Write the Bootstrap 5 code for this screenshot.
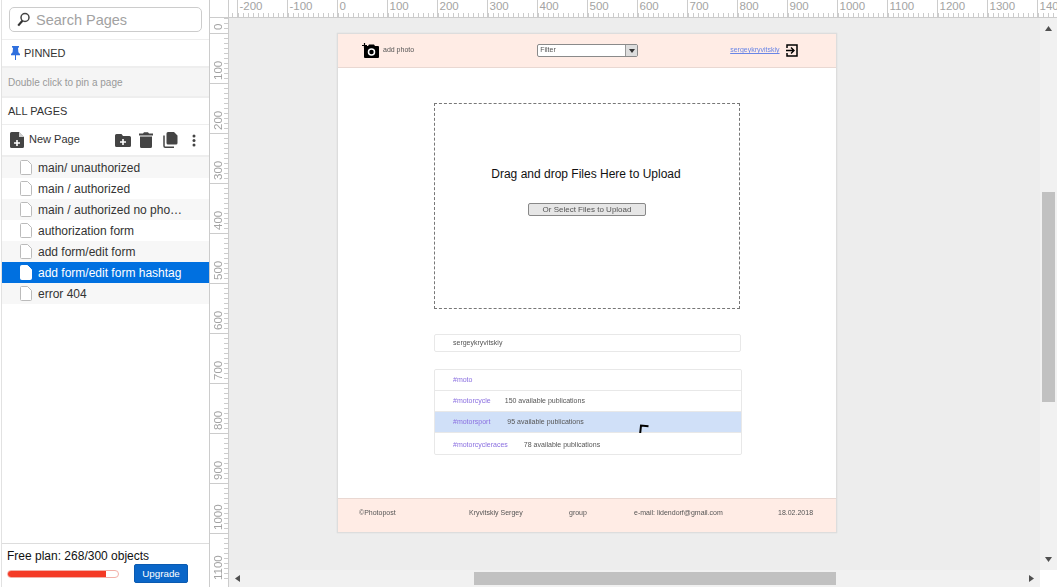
<!DOCTYPE html>
<html lang="en">
  <head>
    <meta charset="utf-8" />
    <title>Wireframe editor</title>
    <link href="https://cdn.jsdelivr.net/npm/bootstrap@5.3.2/dist/css/bootstrap.min.css" rel="stylesheet" />
    <style>
      html, body { height: 100%; }
      body {
        font-family: "Liberation Sans", Arial, sans-serif;
        font-size: 12px;
        color: #333;
        background: #fff;
        overflow: hidden;
      }
      .app-shell { height: 587px; width: 1057px; }

      /* left panel */
      .side-panel {
        margin-left: 1px;
        flex: 0 0 auto;
        border-left: 1px solid #e2e2e2;
        border-right: 1px solid #ccc;
        box-sizing: content-box;
        width: 207px;
      }
      .search-wrap { height: 40px; padding: 7px 7px 0 7px; border-bottom: 1px solid #eee; }
      .search-box { height: 25px; border: 1px solid #ccc; border-radius: 5px; padding: 0 0 0 7px; gap: 6px; }
      .search-box input { border: 0; outline: 0; padding: 1px 0 0 0; width: 150px; font-size: 14.5px; color: #999; background: none; line-height: 22px; }
      .search-box input::placeholder { color: #a2a2a2; opacity: 1; }
      .pin-row { height: 28px; padding-left: 9px; gap: 4px; font-size: 11px; border-bottom: 2px solid #eee; }
      .pin-hint { height: 30px; padding-left: 6px; background: #f5f5f5; color: #999; font-size: 10px; border-bottom: 2px solid #eee; }
      .all-row { height: 27px; padding-left: 6px; font-size: 11px; border-bottom: 1px solid #eee; }
      .tool-row { height: 32px; padding-left: 8px; border-bottom: 2px solid #eee; }
      .tool-row .new-page { margin-left: 5px; margin-right: 35px; font-size: 11px; position: relative; top: -1px; }
      .tool-row svg { flex: 0 0 auto; }
      .tool-gap { margin-left: 8px; }
      .tool-gap-copy { margin-left: 10px; }
      .tool-gap-more { margin-left: 14px; }
      .page-list { --bs-list-group-border-width: 0; --bs-list-group-bg: transparent; --bs-list-group-active-bg: #0070e0; --bs-list-group-active-color: #fff; }
      .page-list .list-group-item { height: 21px; padding: 0 0 0 18px; gap: 6px; font-size: 12px; color: #333; }
      .page-list .list-group-item:nth-child(odd) { background: #f7f7f7; }
      .page-list .list-group-item.active { background: #0070e0; color: #fff; font-weight: 400; }
      .page-name { white-space: nowrap; }
      .file-line { fill: #fff; stroke: #bbb; }
      .active .file-line { fill: #fff; stroke: #fff; }
      .plan-box { height: 44px; border-top: 1px solid #ddd; padding: 5px 0 0 5px; color: #111; line-height: 14px; }
      .plan-bar { height: 8px; width: 112px; margin-top: 7px; background: #fff; border: 1px solid #f3b0a8; border-radius: 4px; --bs-progress-bar-bg: #f43a25; }
      .upgrade-btn { --bs-btn-padding-y: 0; --bs-btn-padding-x: 0; --bs-btn-font-size: 9.8px; --bs-btn-bg: #0a66c8; --bs-btn-border-color: #0a5ab0; --bs-btn-border-radius: 2px; width: 54px; height: 19px; margin-left: 15px; margin-top: 1px; line-height: 17px; }

      /* rulers and canvas */
      .work-grid {
        display: grid;
        flex: 1 1 auto;
        min-width: 0;
        grid-template-columns: 19px 811px 17px;
        grid-template-rows: 18px 552px 17px;
      }
      .ruler-corner { border-right: 1px solid #ccc; border-bottom: 1px solid #ccc; }
      .ruler-top {
        grid-column: 2 / 4;
        display: flex;
        overflow: hidden;
        border-bottom: 1px solid #ccc;
        padding-left: 8px;
        background: linear-gradient(90deg, #ccc 1px, transparent 1px) 3px 100% / 5px 4px repeat-x;
      }
      .ruler-top .tick-cell { flex: 0 0 50px; height: 17px; background: #fff linear-gradient(90deg, #ccc 1px, transparent 1px) 0 100% / 5px 4px repeat-x; border-left: 1px solid #ccc; padding-left: 1.5px; font-size: 11.5px; line-height: 13px; color: #a3a3a3; }
      .ruler-side {
        grid-row: 2 / 4;
        overflow: hidden;
        border-right: 1px solid #ccc;
      }
      .ruler-side .tick-cell {
        display: flex;
        height: 50px;
        border-top: 1px solid #ccc;
        background: linear-gradient(#ccc 1px, transparent 1px) 100% 4px / 4px 5px repeat-y;
        color: #a3a3a3;
        font-size: 11.5px;
        line-height: 12px;
        padding-left: 2px;
        box-sizing: border-box;
      }
      .ruler-side .tick-cell span { writing-mode: vertical-rl; transform: rotate(180deg); padding-top: 3px; height: 49px; text-align: left; }
      .side-zero { margin-top: -35px; }

      .canvas-area { background: #ededed; padding: 15px 0 0 108px; overflow: hidden; }
      .scroll-v { background: #f1f1f1; padding: 8px 0; }
      .scroll-h { background: #f1f1f1; padding: 0 6px; }
      .thumb-v { width: 13px; height: 210px; margin: 161px auto auto auto; background: #c1c1c1; }
      .thumb-h { height: 13px; width: 362px; margin: auto auto auto 234px; background: #c1c1c1; }
      .scroll-corner { background: #fff; }

      /* the mockup */
      .mock-page { width: 500px; height: 500px; background: #fff; border: 1px solid #ddd; box-shadow: 0 0 1px #ccc; }
      .tiny-text { font-size: 7px; color: #555; filter: blur(0.3px); }
      .mock-head { height: 34px; background: #ffece5; border-bottom: 1px solid #e9d8d2; padding-left: 24px; flex: 0 0 auto; }
      .mock-head .add-label { margin-left: 4px; }
      .filter-box { width: 101px; height: 13px; margin-left: 123px; background: #fff; border: 1px solid #8a8a8a; border-radius: 2px; padding-left: 2px; }
      .filter-arrow { width: 12px; height: 100%; margin-left: auto; background: #ddd; border-left: 1px solid #999; }
      .user-link { margin-left: 92px; color: #6a86e6; text-decoration: underline; }
      .exit-icon { margin-left: 6px; }
      .mock-body { padding: 35px 0 0 96px; flex: 1 1 auto; }
      .drop-zone { width: 306px; height: 206px; border: 1px dashed #777; padding-top: 62px; }
      .drop-title { font-size: 12px; color: #111; line-height: 16px; margin-right: 2px; }
      .drop-btn { width: 118px; height: 13px; margin-top: 21px; background: #e6e6e6; border: 1px solid #888; border-radius: 2px; line-height: 11px; font-size: 8px; }
      .user-box { width: 307px; height: 18px; margin-top: 25px; border: 1px solid #e8e8e8; border-radius: 2px; padding: 1px 0 0 18px; }
      .tag-list { width: 308px; margin-top: 17px; border: 1px solid #e8e8e8; border-radius: 2px; --bs-list-group-border-width: 0; --bs-list-group-bg: transparent; }
      .tag-list .list-group-item { height: 21px; padding: 1px 0 0 18px; border-bottom: 1px solid #e8e8e8; background: #fff; }
      .tag-list .list-group-item:last-child { border-bottom: 0; padding-top: 3px; }
      .tag-list .tag-on { background: #d0e0f8; }
      .tag-name { color: #8a6fe0; }
      .tag-gap-a { margin-left: 14px; }
      .tag-gap-b { margin-left: 16px; }
      .tag-on .tag-gap-b { margin-left: 17px; }
      .mouse-mark { position: absolute; left: 204px; top: 12px; }
      .mock-foot {
        height: 34px;
        flex: 0 0 auto;
        display: grid;
        grid-template-columns: 110px 100px 65px 144px auto;
        align-items: center;
        padding: 0 0 4px 21px;
        background: #ffece5;
        border-top: 1px solid #e9d8d2;
      }
    </style>
  </head>
  <body>
    <div class="app-shell d-flex">
      <aside class="side-panel d-flex flex-column">
        <div class="search-wrap">
          <div class="search-box d-flex align-items-center">
            <svg width="13" height="15" viewBox="0 0 13 15"><circle cx="8" cy="5.5" r="4" fill="none" stroke="#444" stroke-width="1.5" /><path d="M5.4 8.8 1.2 13.6" stroke="#333" stroke-width="2.2" fill="none" /></svg>
            <input type="text" placeholder="Search Pages" />
          </div>
        </div>
        <div class="pin-row d-flex align-items-center">
          <svg width="9" height="14" viewBox="0 0 9 14"><path d="M1 0h7v1.2L7 2l.4 4.2L9 8v1.2H5V14H4V9.2H0V8l1.6-1.8L2 2 1 1.2z" fill="#2f6fde" /></svg>
          <span>PINNED</span>
        </div>
        <div class="pin-hint d-flex align-items-center">Double click to pin a page</div>
        <div class="all-row d-flex align-items-center">ALL PAGES</div>
        <div class="tool-row d-flex align-items-center">
          <svg width="14" height="16" viewBox="0 0 14 16"><path d="M1.5 0H9l5 5v9.5a1.5 1.5 0 0 1-1.5 1.5h-11A1.5 1.5 0 0 1 0 14.5v-13A1.5 1.5 0 0 1 1.5 0z" fill="#444" /><path d="M9 0v5h5z" fill="#fff" opacity=".75" /><path d="M7 8v6M4 11h6" stroke="#fff" stroke-width="1.6" /></svg>
          <span class="new-page">New Page</span>
          <svg width="16" height="13" viewBox="0 0 16 13"><path d="M1.5 0h5L8 2h6.5A1.5 1.5 0 0 1 16 3.5v8a1.5 1.5 0 0 1-1.5 1.5h-13A1.5 1.5 0 0 1 0 11.5v-10A1.5 1.5 0 0 1 1.5 0z" fill="#444" /><path d="M8 5v6M5 8h6" stroke="#fff" stroke-width="1.6" /></svg>
          <svg class="tool-gap" width="14" height="16" viewBox="0 0 14 16"><path d="M0 1.5h4L5 .3h4l1 1.2h4V3.5H0zM1 4.5h12V14.500a1.500 1.500 0 0 1-1.500 1.500h-9A1.500 1.500 0 0 1 1 14.500z" fill="#444" /></svg>
          <svg class="tool-gap-copy" width="15" height="16" viewBox="0 0 15 16"><path d="M5 0h6l3.500 3.500V11a1.500 1.500 0 0 1-1.500 1.500H5A1.500 1.500 0 0 1 3.500 11V1.500A1.500 1.500 0 0 1 5 0z" fill="#444" /><path d="M1 3.500V14a1.200 1.200 0 0 0 1.200 1.200H11" fill="none" stroke="#444" stroke-width="1.500" /></svg>
          <svg class="tool-gap-more" width="4" height="13" viewBox="0 0 4 13"><circle cx="2" cy="2" r="1.500" fill="#444" /><circle cx="2" cy="6.500" r="1.500" fill="#444" /><circle cx="2" cy="11" r="1.500" fill="#444" /></svg>
        </div>
        <div class="page-list list-group list-group-flush" id="pageList"></div>
        <div class="plan-box mt-auto">
          <div>Free plan: 268/300 objects</div>
          <div class="d-flex align-items-start">
            <div class="progress plan-bar"><div class="progress-bar" id="planFill"></div></div>
            <button class="btn btn-primary upgrade-btn" type="button">Upgrade</button>
          </div>
        </div>
      </aside>

      <main class="work-grid">
        <div class="ruler-corner"></div>
        <div class="ruler-top" id="rulerTop"></div>
        <div class="ruler-side" id="rulerSide"></div>

        <div class="canvas-area">
          <div class="mock-page d-flex flex-column">
            <header class="mock-head d-flex align-items-center tiny-text">
              <svg width="17" height="15" viewBox="0 0 17 15"><path d="M3 3h3l1-1.500h5L13 3h3a1 1 0 0 1 1 1v10a1 1 0 0 1-1 1H3a1 1 0 0 1-1-1V4a1 1 0 0 1 1-1z" fill="#000" /><circle cx="9.500" cy="9" r="3" fill="none" stroke="#fff" stroke-width="1.500" /><path d="M2.500 0v5M0 2.500h5" stroke="#000" stroke-width="1.200" /></svg>
              <span class="add-label">add photo</span>
              <div class="filter-box d-flex align-items-center">
                <span>Filter</span>
                <div class="filter-arrow d-flex align-items-center justify-content-center">
                  <svg width="6" height="4" viewBox="0 0 6 4"><path d="M0 0h6L3 4z" fill="#333" /></svg>
                </div>
              </div>
              <a class="user-link" href="#">sergeykryvitskiy</a>
              <svg class="exit-icon" width="12" height="13" viewBox="0 0 12 13"><path d="M1 4V1h10v11H1V9" fill="none" stroke="#000" stroke-width="1.500" /><path d="M0 6.500h7M5 3.500l3 3-3 3" fill="none" stroke="#000" stroke-width="1.400" /></svg>
            </header>

            <section class="mock-body d-flex flex-column">
              <div class="drop-zone d-flex flex-column align-items-center">
                <div class="drop-title">Drag and drop Files Here to Upload</div>
                <div class="drop-btn text-center tiny-text">Or Select Files to Upload</div>
              </div>
              <div class="user-box d-flex align-items-center tiny-text">sergeykryvitskiy</div>
              <div class="tag-list list-group">
                <div class="list-group-item d-flex align-items-center tiny-text"><span class="tag-name">#moto</span></div>
                <div class="list-group-item d-flex align-items-center tiny-text"><span class="tag-name">#motorcycle</span><span class="tag-gap-a">150 available publications</span></div>
                <div class="list-group-item tag-on d-flex align-items-center position-relative">
                  <span class="tiny-text tag-name">#motorsport</span><span class="tiny-text tag-gap-b">95 available publications</span>
                  <svg class="mouse-mark" width="10" height="9" viewBox="0 0 10 9"><path d="M1.200 9 2 1.500l7.500.8" fill="none" stroke="#000" stroke-width="2" /></svg>
                </div>
                <div class="list-group-item d-flex align-items-center tiny-text"><span class="tag-name">#motorcycleraces</span><span class="tag-gap-b">78 available publications</span></div>
              </div>
            </section>

            <footer class="mock-foot tiny-text">
              <span>©Photopost</span>
              <span>Kryvitskiy Sergey</span>
              <span>group</span>
              <span>e-mail: lidendorf@gmail.com</span>
              <span>18.02.2018</span>
            </footer>
          </div>
        </div>

        <div class="scroll-v d-flex flex-column align-items-center">
          <svg width="7" height="5" viewBox="0 0 7 5"><path d="M3.500 0 7 5H0z" fill="#505050" /></svg>
          <div class="thumb-v"></div>
          <svg width="7" height="5" viewBox="0 0 7 5"><path d="M0 0h7L3.500 5z" fill="#505050" /></svg>
        </div>
        <div class="scroll-h d-flex align-items-center">
          <svg width="5" height="7" viewBox="0 0 5 7"><path d="M5 0v7L0 3.500z" fill="#505050" /></svg>
          <div class="thumb-h"></div>
          <svg width="5" height="7" viewBox="0 0 5 7"><path d="M0 0v7l5-3.500z" fill="#505050" /></svg>
        </div>
        <div class="scroll-corner"></div>
      </main>
    </div>

    <script src="https://cdn.jsdelivr.net/npm/bootstrap@5.3.2/dist/js/bootstrap.bundle.min.js"></script>
    <script>
      // page list
      const pages = [
        "main/ unauthorized",
        "main / authorized",
        "main / authorized no pho…",
        "authorization form",
        "add form/edit form",
        "add form/edit form hashtag",
        "error 404",
      ];
      const fileIcon =
        '<svg width="12" height="15" viewBox="0 0 12 15"><path class="file-line" d="M1.500.5h6l4 4v9a1 1 0 0 1-1 1h-9a1 1 0 0 1-1-1v-12a1 1 0 0 1 1-1z" /></svg>';
      document.getElementById("pageList").innerHTML = pages
        .map((name, i) => {
          const on = i === 5 ? " active" : "";
          return `<div class="list-group-item d-flex align-items-center${on}">${fileIcon}<span class="page-name">${name}</span></div>`;
        })
        .join("");

      // free plan bar, 268 of 300 objects
      document.getElementById("planFill").style.width = (268 / 300) * 100 + "%";

      // rulers: 100 units is 50px
      let top_ = "";
      for (let v = -200; v <= 1400; v += 100) {
        top_ += `<div class="tick-cell">${v}</div>`;
      }
      document.getElementById("rulerTop").innerHTML = top_;

      let side = "";
      for (let v = 0; v <= 1100; v += 100) {
        side += `<div class="tick-cell${v === 0 ? " side-zero" : ""}"><span>${v}</span></div>`;
      }
      document.getElementById("rulerSide").innerHTML = side;
    </script>
  </body>
</html>
